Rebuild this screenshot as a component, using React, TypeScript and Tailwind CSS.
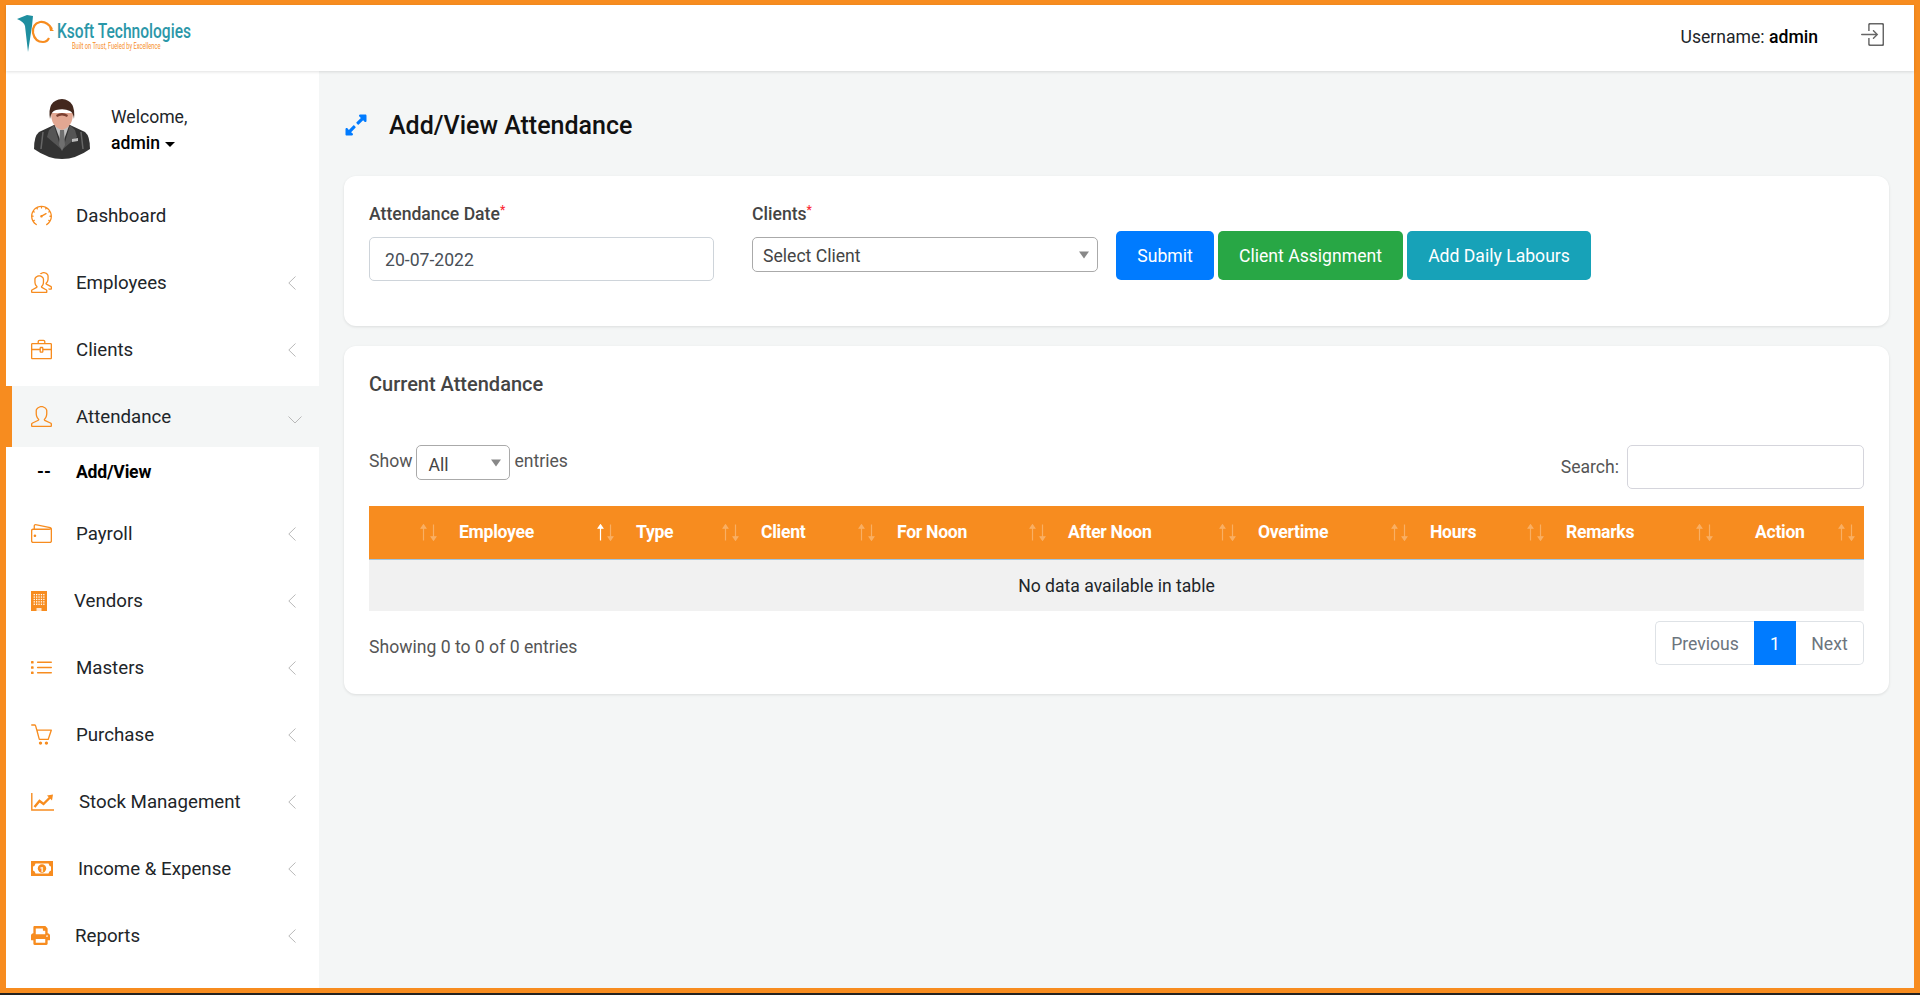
import React from 'react'
import { SlSpeedometer, SlPeople, SlBriefcase, SlUser, SlWallet, SlList, SlBasket, SlLogin } from 'react-icons/sl'
import { FaPrint, FaExpandAlt } from 'react-icons/fa'

const orange = 'text-[#f78c1f]'

function BuildingIcon() {
  const windows = []
  for (let y = 3; y < 15; y += 2.4) {
    for (let x = 2.6; x < 13; x += 2.4) {
      windows.push(<rect key={`${x}-${y}`} x={x} y={y} width="1.3" height="1.3" fill="#fff" />)
    }
  }
  return (
    <svg width="16" height="20" viewBox="0 0 16 20">
      <rect width="16" height="20" fill="currentColor" />
      {windows}
      <rect x="5.5" y="17" width="5" height="3" fill="#fff" opacity="0.8" />
    </svg>
  )
}

function StockIcon() {
  return (
    <svg width="23" height="18" viewBox="0 0 23 18" className="shrink-0">
      <path d="M0.8 0 V17 H23" fill="none" stroke="currentColor" strokeWidth="1.4" />
      <path d="M3.5 14 L8.5 8 L12.5 11 L19 4.5" fill="none" stroke="currentColor" strokeWidth="2.4" />
      <path d="M16 2.5 L22 1.5 L21 7.5 Z" fill="currentColor" />
    </svg>
  )
}

function MoneyIcon() {
  return (
    <svg width="22" height="15" viewBox="0 0 22 15" className="shrink-0">
      <rect width="22" height="15" fill="currentColor" />
      <path d="M4.5 2.5 H17.5 Q18 5 20 5.5 V9.5 Q18 10 17.5 12.5 H4.5 Q4 10 2 9.5 V5.5 Q4 5 4.5 2.5 Z" fill="#fff" />
      <circle cx="11" cy="7.5" r="4.2" fill="currentColor" />
      <text x="11" y="10.5" textAnchor="middle" fontSize="8" fontWeight="700" fill="#fff">1</text>
    </svg>
  )
}

const menu = [
  { label: 'Dashboard', icon: <SlSpeedometer size={21} />, textClass: 'ml-[18px]', noArrow: true },
  { label: 'Employees', icon: <SlPeople size={21} />, textClass: 'ml-[18px]' },
  { label: 'Clients', icon: <SlBriefcase size={21} />, textClass: 'ml-[18px]' },
  { label: 'Attendance', icon: <SlUser size={21} />, textClass: 'ml-[18px]', active: true },
  { label: 'Payroll', icon: <SlWallet size={21} />, textClass: 'ml-[18px]' },
  { label: 'Vendors', icon: <BuildingIcon />, textClass: 'ml-[16px]' },
  { label: 'Masters', icon: <SlList size={21} />, textClass: 'ml-[18px]' },
  { label: 'Purchase', icon: <SlBasket size={21} />, textClass: 'ml-[18px]' },
  { label: 'Stock Management', icon: <StockIcon />, textClass: 'ml-[21px]' },
  { label: 'Income & Expense', icon: <MoneyIcon />, textClass: 'ml-[20px]' },
  { label: 'Reports', icon: <FaPrint size={19} />, textClass: 'ml-[17px]' },
]

const columns = [
  { label: '', width: 'w-[77px]' },
  { label: 'Employee', width: 'w-[177px]', sorted: true },
  { label: 'Type', width: 'w-[125px]' },
  { label: 'Client', width: 'w-[136px]' },
  { label: 'For Noon', width: 'w-[171px]' },
  { label: 'After Noon', width: 'w-[190px]' },
  { label: 'Overtime', width: 'w-[172px]' },
  { label: 'Hours', width: 'w-[136px]' },
  { label: 'Remarks', width: 'w-[169px]' },
  { label: 'Action', width: 'w-[142px]', pad: 'pl-[33px]' },
]

function Logo() {
  return (
    <div className="flex items-start">
      <svg width="44" height="42" viewBox="0 0 44 42" className="mt-[9px] shrink-0">
        <path d="M1 5 L11 1 L17 2 L16 12 L12 38 L9 12 Q8 8 1 5 Z" fill="#1f8fa0" />
        <path d="M36 15 Q31 7 24 8 Q16 10 17 19 Q19 28 27 28 Q31 28 33 24" fill="none" stroke="#f78c1f" strokeWidth="2.2" />
        <path d="M33 12 L38 17 L34 17 Z" fill="#f78c1f" />
      </svg>
      <div className="w-[133px] whitespace-nowrap ml-[-3px] mt-[16px]">
        <div className="origin-left scale-x-[.74] text-[21px] leading-[20px] font-medium text-[#2b97a8]">Ksoft Technologies</div>
        <div className="origin-left scale-x-[.67] ml-[15px] mt-[1px] text-[8.5px] leading-[9px] text-[#f78c1f]">Built on Trust, Fueled by Excellence</div>
      </div>
    </div>
  )
}

function Avatar() {
  return (
    <svg width="56" height="60" viewBox="0 0 56 60">
      <path d="M0 50 Q0 37 5 33 L20 26 L36 26 L51 33 Q56 37 56 50 Q42 60 28 60 Q14 60 0 50 Z" fill="#333" />
      <path d="M9 33 L7 50 M47 33 L49 50" stroke="#666" strokeWidth="1.5" fill="none" />
      <path d="M20 26 L27 50 L13 38 L15 31 Z M36 26 L29 50 L43 38 L41 31 Z" fill="#555" />
      <path d="M21 27 L28 46 L35 27 Z" fill="#c2c2c2" />
      <path d="M26 31 L30 31 L31 46 L28 52 L25 46 Z" fill="#6f6f6f" />
      <path d="M38 40 L44 39 L44 42 L38 43 Z" fill="#bbb" />
      <path d="M17 14 Q17 28 28 31 Q39 28 39 14 Z" fill="#e2a792" />
      <path d="M16 20 Q13 1 28 0 Q42 1 40 20 Q39 13 36 12 Q30 9 22 11 Q17 12 16 20 Z" fill="#43281e" />
      <path d="M22 16 Q28 12 34 16 L33 18 Q28 15 23 18 Z" fill="#7a3f30" />
    </svg>
  )
}

function ChevronLeft() {
  return (
    <svg width="8" height="14" viewBox="0 0 8 14" className="text-[#b9b9b9]">
      <path d="M7.5 0.5 L0.8 7 L7.5 13.5" fill="none" stroke="currentColor" strokeWidth="1" />
    </svg>
  )
}

function ChevronDown() {
  return (
    <svg width="14" height="8" viewBox="0 0 14 8" className="text-[#b9b9b9] mt-[6px]">
      <path d="M0.5 0.5 L7 7 L13.5 0.5" fill="none" stroke="currentColor" strokeWidth="1" />
    </svg>
  )
}

function SortArrows({ sorted }: { sorted?: boolean }) {
  return (
    <svg width="17" height="17" viewBox="0 0 17 17" className="shrink-0 text-white">
      <g fill="none" stroke="currentColor" strokeWidth="1.2" opacity={sorted ? 1 : 0.3}>
        <path d="M3.5 16.5 V1" />
        <path d="M1.2 4.2 L3.5 0.8 L5.8 4.2 Z" fill="currentColor" />
      </g>
      <g fill="none" stroke="currentColor" strokeWidth="1.2" opacity="0.3">
        <path d="M13.5 0.5 V16" />
        <path d="M11.2 12.8 L13.5 16.2 L15.8 12.8 Z" fill="currentColor" />
      </g>
    </svg>
  )
}

function Caret() {
  return <span className="absolute top-1/2 -translate-y-1/2 right-[9px] w-0 h-0 border-x-[5px] border-x-transparent border-t-[7px] border-t-[#888] pointer-events-none" />
}

function MenuRow({ item }: { item: (typeof menu)[number] }) {
  return (
    <a className={`flex items-center h-[61px] mb-[6px] ${item.active ? 'bg-[#f4f6f6] border-l-[6px] border-[#f78c1f] pl-[19px] pr-[17px]' : 'pl-[25px] pr-[23px]'}`}>
      <span className={`w-[27px] flex items-center ${orange}`}>{item.icon}</span>
      <span className={`flex-1 pt-[2px] text-[18.7px] text-[#212529] ${item.textClass}`}>{item.label}</span>
      {!item.noArrow && (item.active ? <ChevronDown /> : <ChevronLeft />)}
    </a>
  )
}

export default function App() {
  return (
    <div className="h-screen w-full bg-[#222] font-['Roboto',sans-serif] overflow-hidden">
      <div className="h-[993px] flex flex-col border-solid border-[#f78c1f] border-t-[5px] border-b-[5px] border-x-[6px]">
        <header className="h-[66px] shrink-0 bg-white flex justify-between shadow-[0_1px_3px_rgba(0,0,0,0.12)] relative z-10">
          <div className="pl-[10px]">
            <Logo />
          </div>
          <div className="flex items-start pt-[18px] pr-[30px]">
            <span className="text-[17.6px] leading-[26px] mt-[1px] text-[#212529]">
              Username: <span className="font-medium text-black">admin</span>
            </span>
            <SlLogin size={23} className="ml-[43px] text-[#666]" />
          </div>
        </header>

        <div className="flex flex-1 min-h-0">
          <aside className="w-[313px] shrink-0 bg-white">
            <div className="h-[114px] flex pl-[28px] pt-[28px]">
              <Avatar />
              <div className="ml-[21px] mt-[5px] text-[17.6px] leading-[26px] text-[#212529]">
                <div>Welcome,</div>
                <div className="flex items-center font-medium text-black">
                  admin
                  <span className="ml-[5px] mt-[2px] w-0 h-0 border-x-[5px] border-x-transparent border-t-[5px] border-t-black" />
                </div>
              </div>
            </div>
            {menu.map(item => (
              <React.Fragment key={item.label}>
                <MenuRow item={item} />
                {item.active && (
                  <div className="h-[50px] mt-[-6px] mb-[6px] flex items-center pl-[31px]">
                    <span className="w-[39px] text-[17.6px] font-bold text-black">--</span>
                    <span className="text-[17.6px] font-bold text-black tracking-[-0.2px]">Add/View</span>
                  </div>
                )}
              </React.Fragment>
            ))}
          </aside>

          <main className="flex-1 min-w-0 bg-[#f4f6f6] px-[25px]">
            <div className="h-[105px] flex items-start pt-[40px]">
              <FaExpandAlt size={24} className="mt-[2px] text-[#007bff]" />
              <h1 className="ml-[21px] text-[25px] leading-[30px] font-medium text-[#111]">Add/View Attendance</h1>
            </div>

            <section className="h-[150px] bg-white rounded-[12px] shadow-[0_1px_3px_rgba(0,0,0,0.1)] pl-[25px] flex items-start">
              <div className="w-[345px] pt-[26px]">
                <label className="block text-[17.6px] leading-[24px] font-medium text-[#444] mb-[11px]">
                  Attendance Date<sup className="text-red-500 text-[12px]">*</sup>
                </label>
                <input
                  defaultValue="20-07-2022"
                  className="w-full h-[44px] px-[15px] pt-[2px] border border-[#ced4da] rounded-[5px] text-[17.6px] text-[#495057] outline-none"
                />
              </div>
              <div className="w-[346px] ml-[38px] pt-[26px]">
                <label className="block text-[17.6px] leading-[24px] font-medium text-[#444] mb-[11px]">
                  Clients<sup className="text-red-500 text-[12px]">*</sup>
                </label>
                <div className="relative">
                  <select className="appearance-none w-full h-[35px] pl-[10px] pt-[3px] border border-[#aaa] rounded-[5px] text-[17.6px] text-[#444] bg-white outline-none">
                    <option>Select Client</option>
                  </select>
                  <Caret />
                </div>
              </div>
              <div className="flex gap-[4px] ml-[18px] mt-[55px] text-[17.6px] text-white">
                <button className="w-[98px] h-[49px] pt-[1px] rounded-[5px] bg-[#007bff]">Submit</button>
                <button className="w-[185px] h-[49px] pt-[1px] rounded-[5px] bg-[#28a745]">Client Assignment</button>
                <button className="w-[184px] h-[49px] pt-[1px] rounded-[5px] bg-[#17a2b8]">Add Daily Labours</button>
              </div>
            </section>

            <section className="h-[348px] mt-[20px] bg-white rounded-[12px] shadow-[0_1px_3px_rgba(0,0,0,0.1)] pl-[25px] pr-[25px] pt-[26px]">
              <h2 className="text-[20px] leading-[24px] font-medium text-[#444]">Current Attendance</h2>

              <div className="mt-[49px] h-[44px] flex justify-between text-[17.6px] text-[#555]">
                <div className="flex items-start leading-[32px]">
                  <span>Show</span>
                  <div className="relative mx-[4px]">
                    <select className="appearance-none w-[94px] h-[35px] pl-[11px] pt-[3px] border border-[#aaa] rounded-[5px] text-[#444] bg-white outline-none">
                      <option>All</option>
                    </select>
                    <Caret />
                  </div>
                  <span>entries</span>
                </div>
                <div className="flex items-center">
                  <span>Search:</span>
                  <input className="ml-[8px] w-[237px] h-[44px] border border-[#d5d5dc] rounded-[5px] outline-none" />
                </div>
              </div>

              <table className="mt-[17px] w-full table-fixed border-collapse">
                <thead>
                  <tr className="bg-[#f78c1f] border-b border-[#9fc4e0]">
                    {columns.map((col, i) => (
                      <th key={i} className={`${col.width} h-[53px] p-0`}>
                        <div className={`flex items-center justify-between pr-[9px] ${col.pad || 'pl-[13px]'}`}>
                          <span className="text-[17.6px] font-bold text-white tracking-[-0.3px]">{col.label}</span>
                          <SortArrows sorted={col.sorted} />
                        </div>
                      </th>
                    ))}
                  </tr>
                </thead>
                <tbody>
                  <tr className="bg-[#f1f1f1]">
                    <td colSpan={10} className="h-[52px] pt-[2px] text-center text-[17.6px] text-[#212529]">No data available in table</td>
                  </tr>
                </tbody>
              </table>

              <div className="mt-[10px] flex justify-between items-center text-[17.6px]">
                <span className="pt-[8px] text-[#555]">Showing 0 to 0 of 0 entries</span>
                <div className="flex h-[44px] text-[#6c757d]">
                  <a className="w-[99px] pt-[3px] flex items-center justify-center border border-r-0 border-[#dee2e6] rounded-l-[5px]">Previous</a>
                  <a className="w-[42px] pt-[3px] flex items-center justify-center bg-[#007bff] text-white">1</a>
                  <a className="w-[68px] pt-[3px] flex items-center justify-center border border-l-0 border-[#dee2e6] rounded-r-[5px]">Next</a>
                </div>
              </div>
            </section>
          </main>
        </div>
      </div>
    </div>
  )
}
